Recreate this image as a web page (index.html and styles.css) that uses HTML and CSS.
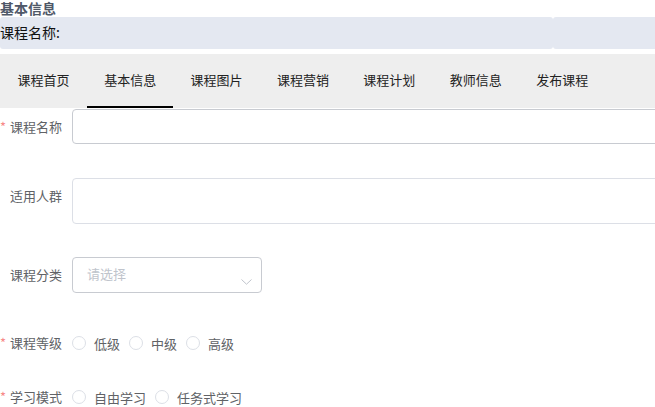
FILE: index.html
```html
<!DOCTYPE html>
<html lang="zh-CN">
<head>
<meta charset="utf-8">
<title>基本信息</title>
<link rel="stylesheet" href="styles.css">
</head>
<body>
<div class="page">
  <h1 class="title">基本信息</h1>
  <div class="band">
    <div class="band-cell band-main">课程名称:</div>
    <div class="band-cell band-side"></div>
  </div>
  <nav class="tabs">
    <div class="tab">课程首页</div>
    <div class="tab active">基本信息</div>
    <div class="tab">课程图片</div>
    <div class="tab">课程营销</div>
    <div class="tab">课程计划</div>
    <div class="tab">教师信息</div>
    <div class="tab">发布课程</div>
  </nav>
  <form class="form">
    <div class="item">
      <label class="label required">课程名称</label>
      <div class="input input-hover"></div>
    </div>
    <div class="item">
      <label class="label">适用人群</label>
      <div class="input textarea"></div>
    </div>
    <div class="item item-select">
      <label class="label">课程分类</label>
      <div class="select">
        <span class="placeholder">请选择</span>
        <svg class="arrow" width="11" height="6" viewBox="0 0 11 6"><polyline points="0.5,0.5 5.5,5.2 10.5,0.5" fill="none" stroke="#c0c4cc" stroke-width="1"/></svg>
      </div>
    </div>
    <div class="item item-radio">
      <label class="label required">课程等级</label>
      <div class="radios">
        <span class="radio"><span class="circle"></span>低级</span>
        <span class="radio"><span class="circle"></span>中级</span>
        <span class="radio"><span class="circle"></span>高级</span>
      </div>
    </div>
    <div class="item">
      <label class="label required">学习模式</label>
      <div class="radios">
        <span class="radio"><span class="circle"></span>自由学习</span>
        <span class="radio"><span class="circle"></span>任务式学习</span>
      </div>
    </div>
  </form>
</div>
</body>
</html>
```
FILE: styles.css
```css
html, body {
  margin: 0;
  padding: 0;
  overflow: hidden;
  background: #fff;
}
body {
  font-family: "Noto Sans CJK SC", "Noto Sans", sans-serif;
}
.page {
  width: 900px;
}
.title {
  margin: 0;
  font-size: 14px;
  line-height: 16px;
  font-weight: bold;
  color: #4f5868;
  height: 17px;
}
.band {
  display: flex;
  height: 32px;
}
.band-cell {
  background: #e4e8f1;
  border-radius: 3px;
}
.band-main {
  width: 553px;
  font-size: 14px;
  line-height: 31px;
  color: #111;
}
.band-side {
  flex: 1;
}
.tabs {
  margin-top: 5px;
  display: flex;
  height: 54px;
  background: #eeeeee;
}
.tab {
  width: 86.4px;
  text-align: center;
  font-size: 13px;
  line-height: 52px;
  color: #222;
  box-sizing: border-box;
  border-bottom: 2px solid transparent;
  height: 54px;
}
.tab:first-child {
  width: 87px;
}
.tab.active {
  border-bottom-color: #000;
}
.form {
  margin: 0;
  padding-top: 1px;
}
.item {
  display: flex;
  align-items: flex-start;
  margin-bottom: 33px;
}
.item-select {
  margin-bottom: 32px;
}
.item-radio {
  margin-bottom: 18px;
}
.label {
  display: flex;
  justify-content: flex-end;
  white-space: nowrap;
  width: 72px;
  box-sizing: border-box;
  padding-right: 10px;
  font-size: 13px;
  line-height: 36px;
  color: #606266;
  flex: none;
}
.label.required::before {
  content: "*";
  color: #f78989;
  margin-right: 4px;
}
.input {
  flex: 1;
  height: 35px;
  border: 1px solid #dcdfe6;
  border-radius: 4px;
  box-sizing: border-box;
  background: #fff;
}
.input-hover {
  border-color: #c8cbd1;
}
.textarea {
  height: 46px;
}
.select {
  position: relative;
  width: 190px;
  height: 36px;
  border: 1px solid #c8cbd1;
  border-radius: 4px;
  box-sizing: border-box;
  padding-left: 14px;
  font-size: 13px;
  line-height: 32px;
  color: #c0c4cc;
}
.arrow {
  position: absolute;
  right: 9px;
  top: 21px;
}
.radios {
  display: flex;
  height: 36px;
  align-items: center;
}
.radio {
  display: flex;
  align-items: center;
  font-size: 13px;
  color: #606266;
  margin-right: 9px;
}
.circle {
  width: 14px;
  height: 14px;
  box-sizing: border-box;
  border: 1px solid #dcdfe6;
  border-radius: 50%;
  background: #fff;
  margin-right: 8px;
}
```
